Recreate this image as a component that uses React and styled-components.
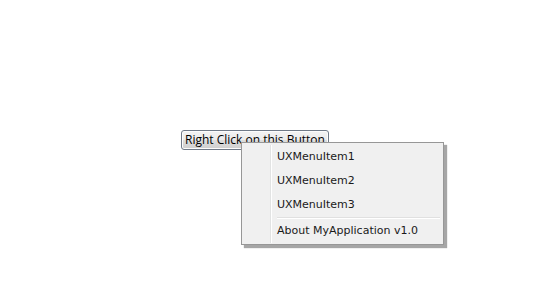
import React from 'react';
import styled, { createGlobalStyle } from 'styled-components';

const GlobalStyle = createGlobalStyle`
  html, body {
    margin: 0;
    padding: 0;
    background: #ffffff;
  }
`;

const Page = styled.div({
  width: '536px',
  height: '281px',
  paddingTop: '130px',
  paddingLeft: '181px',
  boxSizing: 'border-box'
});

const Anchor = styled.div({
  position: 'relative',
  display: 'inline-block'
});

const Button = styled.button({
  height: '20px',
  padding: '0 3px',
  fontFamily: '"Open Sans", "Noto Sans", sans-serif',
  fontSize: '12px',
  lineHeight: '18px',
  color: '#000',
  border: '1px solid #707a88',
  borderRadius: '3px',
  background: 'linear-gradient(#f3f3f3 0%, #ebebeb 50%, #dddddd 50%, #cfcfcf 100%)',
  boxShadow: 'inset 0 0 0 1px #fcfcfc',
  cursor: 'default'
});

const Menu = styled.div({
  position: 'absolute',
  top: '12px',
  left: '60px',
  width: '199px',
  padding: '2px 1px 1px',
  background: '#f0f0f0',
  border: '1px solid #979797',
  boxShadow: '3px 3px 1px rgba(0,0,0,0.35)',
  fontFamily: '"DejaVu Sans", Verdana, sans-serif',
  fontSize: '11px',
  color: '#1a1a1a'
});

const MenuBody = styled.div({
  display: 'flex',
  flexDirection: 'column',
  backgroundImage: 'linear-gradient(90deg, transparent 27px, #e2e3e3 27px, #e2e3e3 28px, #ffffff 28px, #ffffff 29px, transparent 29px)'
});

const Item = styled.div({
  height: '24px',
  lineHeight: '24px',
  paddingLeft: '34px'
});

const Separator = styled.div({
  height: '1px',
  margin: '0 2px 0 34px',
  background: '#e0e0e0',
  borderBottom: '1px solid #ffffff'
});

export default function App() {
  return (
    <Page>
      <GlobalStyle />
      <Anchor>
        <Button>Right Click on this Button</Button>
        <Menu>
          <MenuBody>
            <Item>UXMenuItem1</Item>
            <Item>UXMenuItem2</Item>
            <Item>UXMenuItem3</Item>
            <Separator />
            <Item>About MyApplication v1.0</Item>
          </MenuBody>
        </Menu>
      </Anchor>
    </Page>
  );
}
